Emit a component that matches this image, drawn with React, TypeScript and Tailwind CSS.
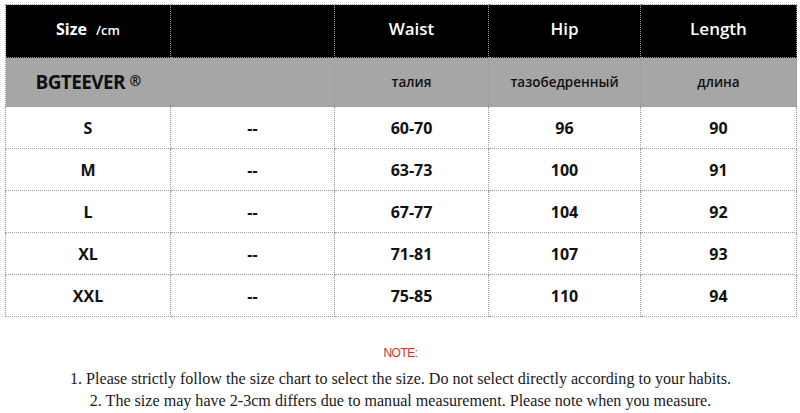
import React from "react";

const rows = [
  ["S", "--", "60-70", "96", "90"],
  ["M", "--", "63-73", "100", "91"],
  ["L", "--", "67-77", "104", "92"],
  ["XL", "--", "71-81", "107", "93"],
  ["XXL", "--", "75-85", "110", "94"],
];

const cell = "border border-dotted border-[#9a9a9a] text-center p-0";

export default function App() {
  return (
    <div className="w-[800px] h-[413px] bg-white pt-[4px] pl-[5px] font-[family-name:'Open_Sans',sans-serif]">
      <table className="border-collapse table-fixed w-[791px]">
        <colgroup>
          <col className="w-[165px]" />
          <col className="w-[164px]" />
          <col className="w-[154px]" />
          <col className="w-[152px]" />
          <col className="w-[156px]" />
        </colgroup>
        <tbody>
          <tr className="h-[53px] bg-black text-white">
            <td className={cell + " pb-[4px]"}>
              <span className="text-[16px] font-bold">Size</span>
              <span className="text-[13px] font-semibold ml-[9px]">/cm</span>
            </td>
            <td className={cell}></td>
            <td className={cell + " text-[17px] font-semibold pb-[4px]"}>Waist</td>
            <td className={cell + " text-[17px] font-semibold pb-[4px]"}>Hip</td>
            <td className={cell + " text-[17px] font-semibold pb-[4px]"}>Length</td>
          </tr>
          <tr className="h-[49px] bg-[#a6a6a6] text-[#111]">
            <td className={cell + " text-[19px] font-bold tracking-[-0.6px]"}>
              BGTEEVER <span className="text-[14px] align-[3px]">®</span>
            </td>
            <td className={cell}></td>
            <td className={cell + " text-[13.5px] font-semibold"}>талия</td>
            <td className={cell + " text-[13.5px] font-semibold"}>тазобедренный</td>
            <td className={cell + " text-[13.5px] font-semibold"}>длина</td>
          </tr>
          {rows.map((r) => (
            <tr key={r[0]} className="h-[42px] text-[16px] font-bold text-[#111]">
              {r.map((v, i) => (
                <td key={i} className={cell}>
                  {v}
                </td>
              ))}
            </tr>
          ))}
        </tbody>
      </table>
      <div className="w-[791px] mt-[28px] text-center">
        <div className="text-[12px] leading-[16px] text-[#c0392b] font-[family-name:'Liberation_Sans',sans-serif] tracking-[-0.5px]">NOTE:</div>
        <div className="mt-[7px] text-[16.1px] leading-[22px] text-[#1a1a1a] font-[family-name:'Liberation_Serif',serif]">
          1. Please strictly follow the size chart to select the size. Do not select directly according to your habits.
        </div>
        <div className="text-[16.1px] leading-[22px] text-[#1a1a1a] font-[family-name:'Liberation_Serif',serif]">
          2. The size may have 2-3cm differs due to manual measurement. Please note when you measure.
        </div>
      </div>
    </div>
  );
}
